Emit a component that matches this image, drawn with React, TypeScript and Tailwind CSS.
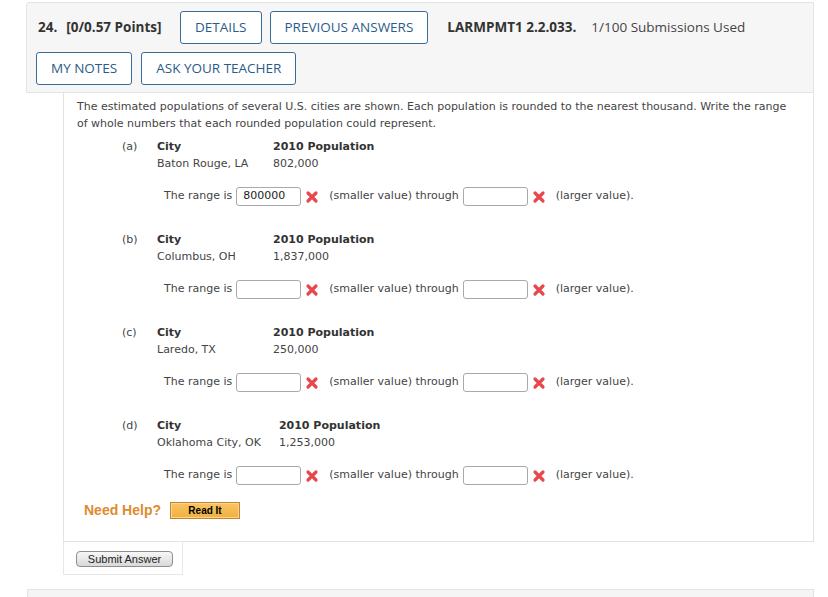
import React from "react";

type Part = { label: string; city: string; pop: string; low?: string };

const PARTS: Part[] = [
  { label: "(a)", city: "Baton Rouge, LA", pop: "802,000", low: "800000" },
  { label: "(b)", city: "Columbus, OH", pop: "1,837,000" },
  { label: "(c)", city: "Laredo, TX", pop: "250,000" },
  { label: "(d)", city: "Oklahoma City, OK", pop: "1,253,000" },
];

const RedX = () => (
  <svg width="14" height="14" viewBox="0 0 14 14" className="shrink-0">
    <path d="M3 3 L11 11 M11 3 L3 11" stroke="#e8474c" strokeWidth="3.2" strokeLinecap="round" />
  </svg>
);

const Answer = ({ value }: { value?: string }) => (
  <div className="w-[65px] h-[19px] border border-[#a9a9a9] rounded-[3px] bg-white pl-[6px] flex items-center text-[11px] text-[#222]">
    {value}
  </div>
);

const HeadBtn = ({ children }: { children: React.ReactNode }) => (
  <div className="h-[33px] px-[14px] flex items-center border-[1.5px] border-[#3a6b98] rounded-[3px] bg-white text-[13.5px] text-[#2b5c89] font-medium">
    {children}
  </div>
);

function PartBlock({ p }: { p: Part }) {
  return (
    <div>
      <div className="flex leading-[17px]">
        <div className="w-[45px] shrink-0" />
        <div className="w-[35px] shrink-0 text-[#444]">{p.label}</div>
        <div className="min-w-[116px] pr-[18px]">
          <div className="font-bold text-[#333]">City</div>
          <div>{p.city}</div>
        </div>
        <div>
          <div className="font-bold text-[#333]">2010 Population</div>
          <div>{p.pop}</div>
        </div>
      </div>
      <div className="mt-[14px] h-[21px] flex items-center pl-[87px]">
        <span>The range is</span>
        <div className="ml-[4px]"><Answer value={p.low} /></div>
        <div className="ml-[4px]"><RedX /></div>
        <span className="ml-[10px]">(smaller value) through</span>
        <div className="ml-[4px]"><Answer /></div>
        <div className="ml-[4px]"><RedX /></div>
        <span className="ml-[10px]">(larger value).</span>
      </div>
    </div>
  );
}

export default function App() {
  return (
    <div className="w-[828px] h-[597px] overflow-hidden bg-white relative">
      <div className="ml-[26px] mt-[2px] w-[788px] bg-[#f6f6f6] border border-[#e4e4e4] rounded-tl-[3px] pl-[9px] pt-[8px] pb-[7px] font-['Open_Sans',sans-serif]">
        <div className="flex items-center gap-[8px]">
          <div className="flex items-center text-[13.5px] font-bold text-[#333] pl-[2px] w-[136px]">
            <span>24.</span>
            <span className="ml-[9px]">[0/0.57 Points]</span>
          </div>
          <HeadBtn>DETAILS</HeadBtn>
          <HeadBtn>PREVIOUS ANSWERS</HeadBtn>
          <span className="ml-[11px] text-[13.5px] font-bold text-[#333]">LARMPMT1 2.2.033.</span>
          <span className="ml-[7px] text-[13.5px] text-[#444]">1/100 Submissions Used</span>
        </div>
        <div className="flex items-center gap-[9px] mt-[8px]">
          <HeadBtn>MY NOTES</HeadBtn>
          <HeadBtn>ASK YOUR TEACHER</HeadBtn>
        </div>
      </div>

      <div className="ml-[63px] w-[751px] border-l border-r border-b border-[#e2e2e2] pl-[13px] pt-[5px] pb-[21px] font-['DejaVu_Sans',Verdana,sans-serif] text-[11px] text-[#444]">
        <p className="leading-[17px] pr-[14px]">
          The estimated populations of several U.S. cities are shown. Each population is rounded to the nearest thousand. Write the range of whole numbers that each rounded population could represent.
        </p>
        <div className="mt-[6px] flex flex-col gap-[24px]">
          {PARTS.map((p) => (
            <PartBlock key={p.label} p={p} />
          ))}
        </div>
        <div className="mt-[14px] h-[20px] flex items-center pl-[7px] font-['Liberation_Sans',Arial,sans-serif]">
          <span className="text-[14px] font-bold text-[#e08a2e]">Need Help?</span>
          <div className="ml-[9px] w-[70px] h-[17px] border border-[#c7822f] bg-[linear-gradient(#f8c463,#f2b03e)] flex items-center justify-center shadow-[inset_0_0_0_1px_#fbd592]">
            <span className="text-[10px] font-bold text-black">Read It</span>
          </div>
        </div>
      </div>

      <div className="ml-[63px] w-[120px] border-l border-r border-b border-[#e8e8e8] pl-[12px] pt-[9px] pb-[7px]">
        <div className="w-[97px] h-[16px] rounded-[4px] border border-[#8e8e8e] bg-[linear-gradient(#f7f7f7,#d9d9d9)] flex items-center justify-center font-['Liberation_Sans',Arial,sans-serif] text-[11px] text-[#222]">
          Submit Answer
        </div>
      </div>

      <div className="ml-[27px] mt-[14px] w-[787px] h-[20px] bg-[#f5f5f5] border-t border-l border-r border-[#e2e2e2]" />
    </div>
  );
}
